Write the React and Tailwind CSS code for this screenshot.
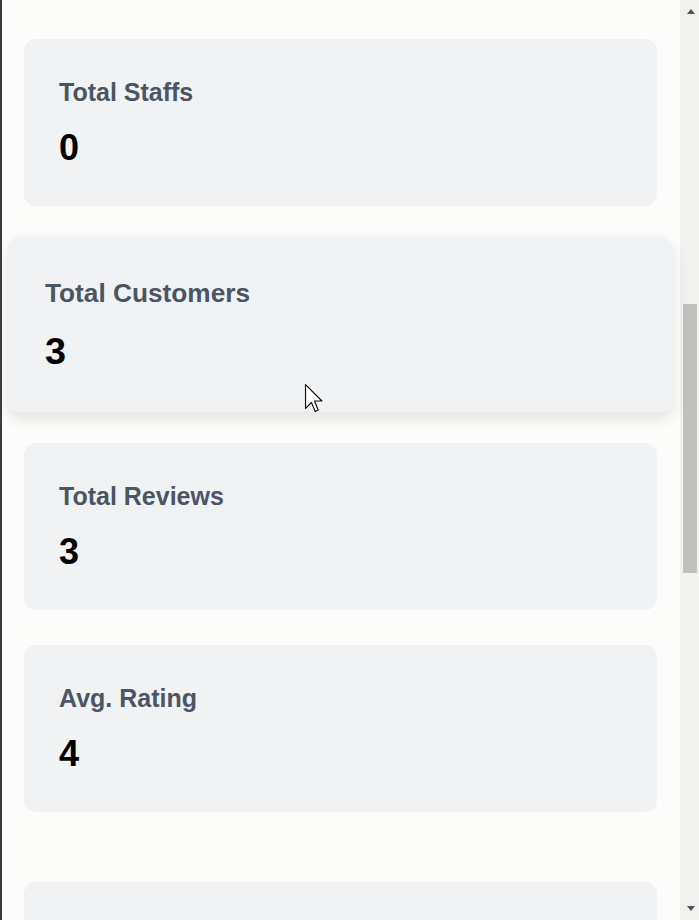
import React from 'react';

const stats = [
  { label: 'Total Staffs', value: 0 },
  { label: 'Total Customers', value: 3, hover: true },
  { label: 'Total Reviews', value: 3 },
  { label: 'Avg. Rating', value: 4 },
];

const StatCard = ({ label, value, hover }) => (
  <div
    className={`relative bg-[#f1f2f4] rounded-[12px] pt-[37px] pb-[38px] px-[35px] ${
      hover ? 'scale-105 shadow-[0_6px_14px_rgba(0,0,0,0.10)]' : ''
    }`}
  >
    <h3 className="text-[25px] leading-[33px] font-bold text-[#4b5563]">{label}</h3>
    <p className="mt-[19px] text-[36px] leading-[40px] font-bold text-black">{value}</p>
    {hover && (
      // cursor over the hovered card
      <svg
        className="absolute left-[282px] top-[140px]"
        width="18"
        height="27"
        viewBox="0 0 12 19"
      >
        <path
          d="M0.5 0.5 L0.5 16.5 L4.5 12.5 L7 18.5 L9 17.5 L6.5 11.5 L11.5 11.5 Z"
          fill="#fff"
          stroke="#111"
          strokeWidth="0.8"
          strokeLinejoin="round"
        />
      </svg>
    )}
  </div>
);

export default function App() {
  return (
    <div
      className="h-[920px] w-full flex overflow-hidden bg-[#fcfcfb] border-l-2 border-[#3c3c3c]"
      style={{ fontFamily: '"Liberation Sans", Arial, sans-serif' }}
    >
      {/* Main content */}
      <main className="flex-1 pt-[39px] pl-[22px] pr-[23px] flex flex-col">
        <div className="flex flex-col gap-[35px]">
          {stats.map((s) => (
            <StatCard key={s.label} {...s} />
          ))}
        </div>
        <div className="mt-[70px] h-[200px] shrink-0 bg-[#f1f2f4] rounded-[12px]" />
      </main>

      {/* Scrollbar */}
      <div className="w-[19px] shrink-0 bg-[#f1f1ef] flex flex-col items-center justify-between py-[9px]">
        <div className="w-0 h-0 border-l-[4.5px] border-r-[4.5px] border-b-[5px] border-l-transparent border-r-transparent border-b-[#505050] ml-[2px]" />
        <div className="flex-1 w-full flex flex-col pt-[290px] pb-[333px] pl-[3px] pr-[2px]">
          <div className="flex-1 bg-[#c1c1bc]" />
        </div>
        <div className="w-0 h-0 border-l-[4.5px] border-r-[4.5px] border-t-[5px] border-l-transparent border-r-transparent border-t-[#505050] ml-[2px]" />
      </div>
    </div>
  );
}
